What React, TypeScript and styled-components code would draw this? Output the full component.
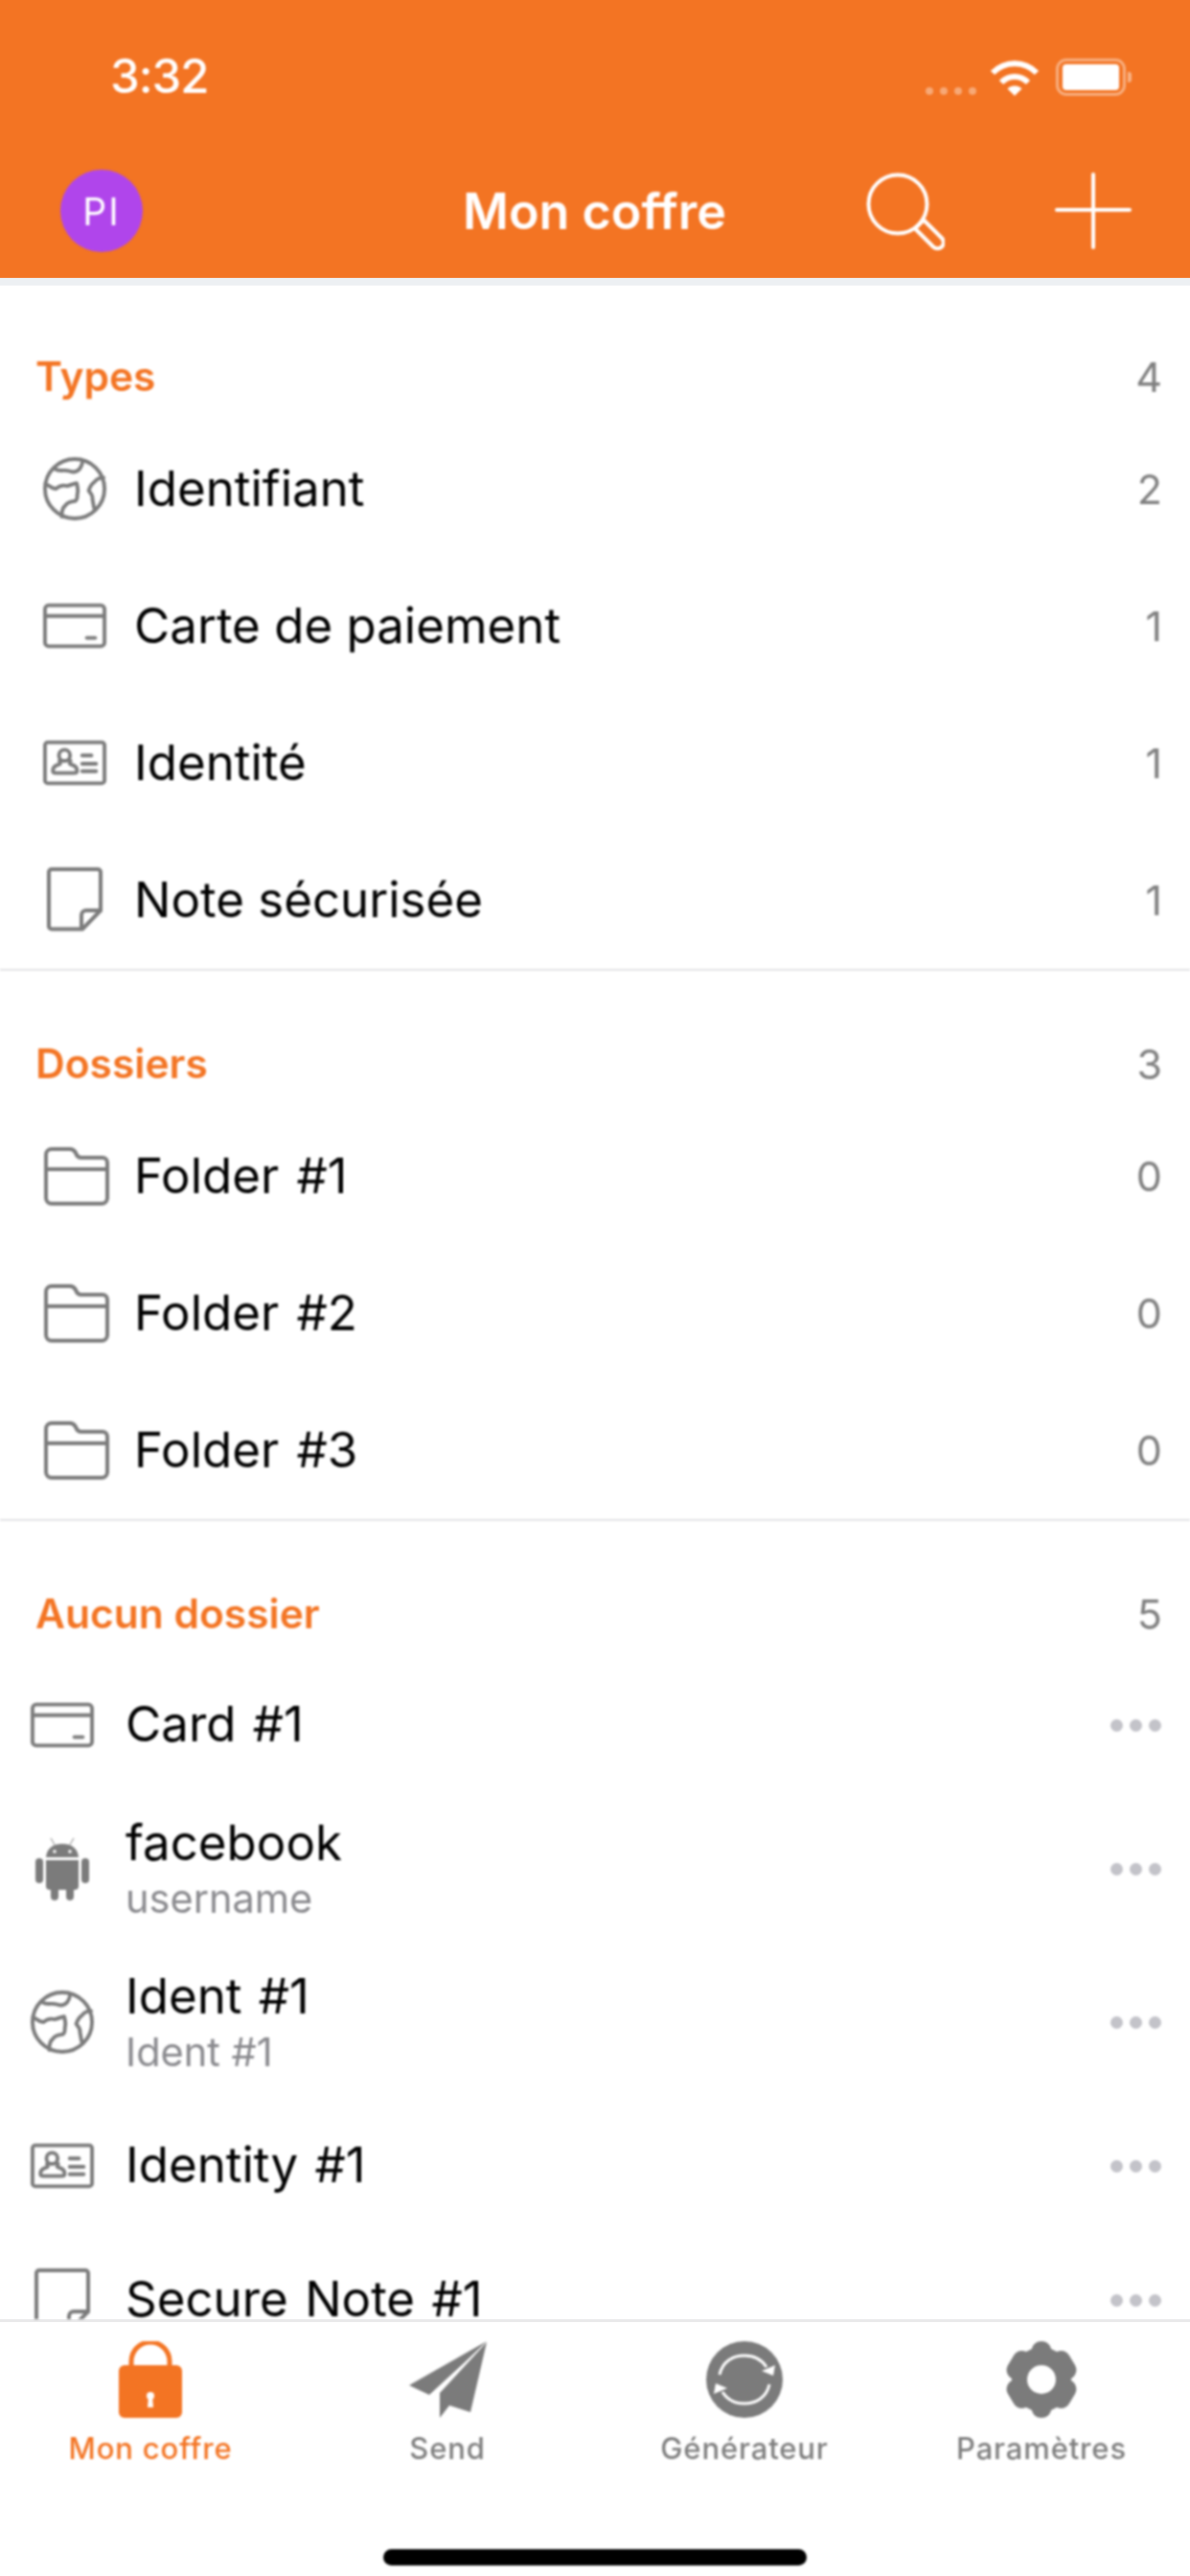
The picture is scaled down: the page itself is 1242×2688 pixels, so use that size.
import React from "react";
import styled, { createGlobalStyle, css } from "styled-components";

const ORANGE = "#f37423";
const ICON = "#7b7b7b";

const soft = css`
  filter: blur(0.9px);
`;

const Global = createGlobalStyle`
  html, body { margin: 0; padding: 0; background: #fff; }
  * { box-sizing: border-box; }
  body { font-family: Inter, "Noto Sans", "Liberation Sans", sans-serif; }
`;

const Screen = styled.div`
  width: 1242px;
  height: 2688px;
  display: flex;
  flex-direction: column;
  overflow: hidden;
  background: #fff;
`;
const Header = styled.header`
  flex: none;
  background: ${ORANGE};
  height: 298px;
  border-bottom: 8px solid #edf0f3;
`;
const StatusBar = styled.div`
  ${soft}
  height: 132px;
  display: flex;
  align-items: center;
  justify-content: space-between;
  padding: 0 67px 0 115px;
`;
const Time = styled.span`
  color: #fff;
  font-size: 49px;
  font-weight: 500;
  line-height: 36px;
  margin-top: 28px;
  letter-spacing: -1px;
`;
const StatusIcons = styled.div`
  display: flex;
  align-items: flex-end;
  margin-top: 29px;
  gap: 14px;
`;
const SignalDots = styled.div`
  display: flex;
  gap: 7px;
  padding-bottom: 1px;
`;
const SignalDot = styled.i`
  display: block;
  width: 8px;
  height: 8px;
  border-radius: 50%;
  background: rgba(255, 255, 255, 0.38);
`;
const Battery = styled.div`
  position: relative;
  width: 73px;
  height: 39px;
  border: 3px solid rgba(255, 255, 255, 0.42);
  border-radius: 11px;
  padding: 3px 4px;
  margin-left: 3px;
  &::after {
    content: "";
    position: absolute;
    right: -9px;
    top: 11px;
    width: 4px;
    height: 11px;
    border-radius: 0 3px 3px 0;
    background: rgba(255, 255, 255, 0.45);
  }
`;
const BatteryFill = styled.div`
  height: 100%;
  background: #fff;
  border-radius: 4px;
`;
const NavBar = styled.nav`
  ${soft}
  height: 158px;
  padding: 24px 61px 0 63px;
  display: grid;
  grid-template-columns: 1fr auto 1fr;
  align-items: start;
`;
const Avatar = styled.div`
  width: 86px;
  height: 86px;
  margin-top: 21px;
  border-radius: 50%;
  background: #b045eb;
  color: #fff;
  font-size: 39px;
  font-weight: 400;
  letter-spacing: 2px;
  display: flex;
  align-items: center;
  justify-content: center;
`;
const NavTitle = styled.h1`
  margin: 27px 0 0 -3px;
  color: #fff;
  font-size: 52px;
  line-height: 76px;
  font-weight: 600;
`;
const NavActions = styled.div`
  display: flex;
  justify-content: flex-end;
  align-items: flex-start;
  gap: 115px;
  margin-top: 24px;
`;
const List = styled.main`
  ${soft}
  flex: 1;
  min-height: 0;
  overflow: hidden;
`;
const Section = styled.section<{ $divider?: boolean }>`
  border-bottom: ${(p) => (p.$divider ? "2px solid #e3e3e5" : "none")};
`;
const SectionHead = styled.div<{ $first?: boolean }>`
  height: ${(p) => (p.$first ? 141 : 143)}px;
  padding: 0 29px 22px 37px;
  display: flex;
  align-items: flex-end;
  justify-content: space-between;
`;
const SectionTitle = styled.h2`
  margin: 0;
  color: ${ORANGE};
  font-size: 42.5px;
  line-height: 48px;
  font-weight: 600;
`;
const Count = styled.span`
  color: #808080;
  font-size: 43px;
  line-height: 48px;
`;
const Row = styled.div`
  height: 143px;
  padding: 0 29px 2px 45px;
  display: flex;
  align-items: center;
`;
const IconSlot = styled.div`
  flex: none;
  width: 66px;
  display: flex;
  justify-content: center;
  align-items: center;
`;
const RowTitle = styled.span`
  flex: 1;
  margin-left: 29px;
  color: #000;
  font-size: 51px;
  line-height: 60px;
`;
const FolderTitle = styled(RowTitle)`
  word-spacing: 4px;
`;
const ItemRow = styled.div<{ $tall?: boolean }>`
  height: ${(p) => (p.$tall ? 160 : 140)}px;
  flex: none;
  padding: 0 30px 0 32px;
  display: flex;
  align-items: center;
`;
const ItemText = styled.div`
  flex: 1;
  margin-left: 33px;
  padding-bottom: 3px;
  display: flex;
  flex-direction: column;
`;
const ItemTitle = styled.span`
  color: #000;
  font-size: 51px;
  line-height: 60px;
  word-spacing: 3px;
`;
const ItemSub = styled.span`
  color: #8a8a8e;
  font-size: 41.5px;
  line-height: 46px;
  margin-top: 5px;
`;
const Dots = styled.div`
  display: flex;
  gap: 7px;
`;
const Dot = styled.i`
  display: block;
  width: 13px;
  height: 13px;
  border-radius: 50%;
  background: #c3c3c9;
`;
const TabBar = styled.footer`
  flex: none;
  height: 268px;
  background: #fff;
  border-top: 3px solid #e9e9ea;
  display: flex;
  flex-direction: column;
`;
const Tabs = styled.div`
  ${soft}
  display: grid;
  grid-template-columns: repeat(4, 1fr);
  padding: 20px 0 0 2px;
`;
const Tab = styled.div<{ $active?: boolean }>`
  display: flex;
  flex-direction: column;
  align-items: center;
  color: ${(p) => (p.$active ? ORANGE : "#7f7f7f")};
`;
const TabIcon = styled.div`
  height: 80px;
  display: flex;
  align-items: center;
  justify-content: center;
`;
const TabLabel = styled.span`
  margin-top: 14px;
  font-size: 31px;
  line-height: 36px;
  font-weight: 500;
  letter-spacing: 0.85px;
`;
const HomeIndicator = styled.div`
  ${soft}
  width: 442px;
  height: 17px;
  border-radius: 9px;
  background: #000;
  margin: 87px auto 0;
`;

const line = { fill: "none", stroke: ICON, strokeWidth: 4, strokeLinecap: "round", strokeLinejoin: "round" } as const;

const GlobeIcon = () => (
  <svg width="68" height="68" viewBox="0 0 68 68" {...line}>
    <circle cx="34" cy="34" r="32" />
    <path d="M13 13c5 3 10 0 15 2s8 1 11-2c2-3 4-6 3-9" />
    <path d="M3 29c4 2 7 5 11 5 3-3 8-4 12-3 5-1 8-3 10-3 1 4 2 7 1 11-1 3 1 5-2 8-4 1-9 1-11 5-3 2-4 5-4 12" />
    <path d="M65 22c-5 0-8 2-10 5-3 2-5 6-6 9 2 3 5 5 4 9 1 4 1 7 2 10" />
  </svg>
);
const CardIcon = () => (
  <svg width="68" height="48" viewBox="0 0 68 48" {...line}>
    <rect x="2" y="2" width="64" height="44" rx="4" />
    <path d="M2 13.5h64" />
    <path d="M47 37h9" />
  </svg>
);
const IdIcon = () => (
  <svg width="68" height="48" viewBox="0 0 68 48" {...line}>
    <rect x="2" y="2" width="64" height="44" rx="3" />
    <circle cx="23" cy="16" r="6" />
    <path d="M17.5 22c1 2 2 3-1 4-3 1-6 3-6 6 0 2 1 3 3 3h20c2 0 3-1 3-3 0-3-3-5-6-6-3-1-2-2-1-4" />
    <path d="M42 16h10M42 25h15M42 33h15" />
  </svg>
);
const NoteIcon = () => (
  <svg width="58" height="67" viewBox="0 0 58 67" {...line}>
    <path d="M5 2h48a3 3 0 0 1 3 3v40L37 64.500H5a3 3 0 0 1-3-3V5a3 3 0 0 1 3-3z" />
    <path d="M56 45H41a5 5 0 0 0-5 5v14" />
  </svg>
);
const FolderIcon = () => (
  <svg width="68" height="62" viewBox="-2 0 68 62" {...line} overflow="visible">
    <path d="M2 18V9a6 6 0 0 1 6-6h19c4 0 5 2 6 4 1 3 3 5 6 5h22a5 5 0 0 1 5 5v37a6 6 0 0 1-6 6H8a6 6 0 0 1-6-6V18z" />
    <path d="M2 24h64" />
  </svg>
);
const AndroidIcon = () => (
  <svg width="56" height="66" viewBox="0 0 56 66" fill={ICON}>
    <path d="M11 21C12 11 19 7 28 7s16 4 17 14z" />
    <path d="M11 24h34v27a4 4 0 0 1-4 4H15a4 4 0 0 1-4-4z" />
    <rect x="0" y="22" width="8" height="26" rx="4" />
    <rect x="48" y="22" width="8" height="26" rx="4" />
    <rect x="16" y="50" width="8" height="16" rx="4" />
    <rect x="32" y="50" width="8" height="16" rx="4" />
    <path d="M16 1l4 7M40 1l-4 7" stroke={ICON} strokeWidth="1.500" opacity="0.6" />
    <circle cx="20" cy="15" r="1.800" fill="#fff" />
    <circle cx="36" cy="15" r="1.800" fill="#fff" />
  </svg>
);
const WifiIcon = () => (
  <svg width="52" height="38" viewBox="0 0 52 38" fill="none" stroke="#fff" strokeWidth="6">
    <path d="M3 14c13-13 33-13 46 0" />
    <path d="M12 24c8-8 20-8 28 0" />
    <path d="M18.500 30.500c4-4 11-4 15 0L26 38z" fill="#fff" stroke="none" />
  </svg>
);
const SearchIcon = () => (
  <svg width="82" height="82" viewBox="0 0 82 82" fill="none" stroke="#fff" strokeWidth="4">
    <circle cx="33" cy="33" r="30.500" />
    <path d="M51 58.500l9-9 19 19a6.300 6.300 0 0 1-9 9z" strokeLinejoin="round" />
  </svg>
);
const PlusIcon = () => (
  <svg width="80" height="80" viewBox="0 0 80 80" stroke="#fff" strokeWidth="4" strokeLinecap="round">
    <path d="M40 2v76M2 39h76" />
  </svg>
);
const LockIcon = () => (
  <svg width="66" height="80" viewBox="0 0 66 80">
    <path d="M13 27V21a20 20 0 0 1 40 0v6" fill="none" stroke={ORANGE} strokeWidth="5" />
    <rect x="0" y="25" width="66" height="55" rx="6" fill={ORANGE} />
    <circle cx="33" cy="57" r="4" fill="#fff" />
    <path d="M31 58h4l1 11h-6z" fill="#fff" />
  </svg>
);
const SendIcon = () => (
  <svg width="81" height="80" viewBox="0 0 81 80" fill={ICON}>
    <path d="M81 0L0 46l21 10L58 22z" />
    <path d="M81 1L32 54v26l10-13 22 7z" />
  </svg>
);
const GeneratorIcon = () => (
  <svg width="80" height="80" viewBox="0 0 80 80">
    <circle cx="40" cy="40" r="40" fill={ICON} />
    <g fill="none" stroke="#fff" strokeWidth="3">
      <path d="M14 35C17 21 28 15 40 15c11 0 18 4 23 12" />
      <path d="M66 45C63 59 52 65 40 65c-11 0-18-4-23-12" />
    </g>
    <path d="M72 25L70 36 58 31z" fill="#fff" />
    <path d="M8 55l2-11 12 5z" fill="#fff" />
  </svg>
);
const GearIcon = () => (
  <svg width="78" height="80" viewBox="0 0 78 80" fill={ICON}>
    <path
      fillRule="evenodd"
      d="M39 0c5 0 9 3 10 8 2 1 4 2 6 3 5-2 10-1 13 4l6 10c3 5 1 11-4 14v2c5 3 7 9 4 14l-6 10c-3 5-8 6-13 4-2 1-4 2-6 3-1 5-5 8-10 8s-9-3-10-8c-2-1-4-2-6-3-5 2-10 1-13-4l-6-10c-3-5-1-11 4-14v-2C3 36 1 30 4 25l6-10c3-5 8-6 13-4 2-1 4-2 6-3 1-5 5-8 10-8zm0 25a15 15 0 1 0 0 30 15 15 0 0 0 0-30z"
    />
  </svg>
);

const types = [
  { icon: <GlobeIcon />, title: "Identifiant", count: 2 },
  { icon: <CardIcon />, title: "Carte de paiement", count: 1 },
  { icon: <IdIcon />, title: "Identité", count: 1 },
  { icon: <NoteIcon />, title: "Note sécurisée", count: 1 },
];
const folders = ["Folder #1", "Folder #2", "Folder #3"];
const items: { icon: React.ReactNode; title: string; sub?: string }[] = [
  { icon: <CardIcon />, title: "Card #1" },
  { icon: <AndroidIcon />, title: "facebook", sub: "username" },
  { icon: <GlobeIcon />, title: "Ident #1", sub: "Ident #1" },
  { icon: <IdIcon />, title: "Identity #1" },
  { icon: <NoteIcon />, title: "Secure Note #1" },
];
const tabs = [
  { icon: <LockIcon />, label: "Mon coffre", active: true },
  { icon: <SendIcon />, label: "Send" },
  { icon: <GeneratorIcon />, label: "Générateur" },
  { icon: <GearIcon />, label: "Paramètres" },
];

export default function App() {
  return (
    <Screen>
      <Global />
      <Header>
        <StatusBar>
          <Time>3:32</Time>
          <StatusIcons>
            <SignalDots>
              {[0, 1, 2, 3].map((i) => (
                <SignalDot key={i} />
              ))}
            </SignalDots>
            <WifiIcon />
            <Battery>
              <BatteryFill />
            </Battery>
          </StatusIcons>
        </StatusBar>
        <NavBar>
          <Avatar>PI</Avatar>
          <NavTitle>Mon coffre</NavTitle>
          <NavActions>
            <SearchIcon />
            <PlusIcon />
          </NavActions>
        </NavBar>
      </Header>
      <List>
        <Section $divider>
          <SectionHead $first>
            <SectionTitle>Types</SectionTitle>
            <Count>4</Count>
          </SectionHead>
          {types.map((t) => (
            <Row key={t.title}>
              <IconSlot>{t.icon}</IconSlot>
              <RowTitle>{t.title}</RowTitle>
              <Count>{t.count}</Count>
            </Row>
          ))}
        </Section>
        <Section $divider>
          <SectionHead>
            <SectionTitle>Dossiers</SectionTitle>
            <Count>3</Count>
          </SectionHead>
          {folders.map((f) => (
            <Row key={f}>
              <IconSlot>
                <FolderIcon />
              </IconSlot>
              <FolderTitle>{f}</FolderTitle>
              <Count>0</Count>
            </Row>
          ))}
        </Section>
        <Section>
          <SectionHead>
            <SectionTitle>Aucun dossier</SectionTitle>
            <Count>5</Count>
          </SectionHead>
          {items.map((it) => (
            <ItemRow key={it.title} $tall={!!it.sub}>
              <IconSlot>{it.icon}</IconSlot>
              <ItemText>
                <ItemTitle>{it.title}</ItemTitle>
                {it.sub && <ItemSub>{it.sub}</ItemSub>}
              </ItemText>
              <Dots>
                <Dot />
                <Dot />
                <Dot />
              </Dots>
            </ItemRow>
          ))}
        </Section>
      </List>
      <TabBar>
        <Tabs>
          {tabs.map((t) => (
            <Tab key={t.label} $active={t.active}>
              <TabIcon>{t.icon}</TabIcon>
              <TabLabel>{t.label}</TabLabel>
            </Tab>
          ))}
        </Tabs>
        <HomeIndicator />
      </TabBar>
    </Screen>
  );
}
